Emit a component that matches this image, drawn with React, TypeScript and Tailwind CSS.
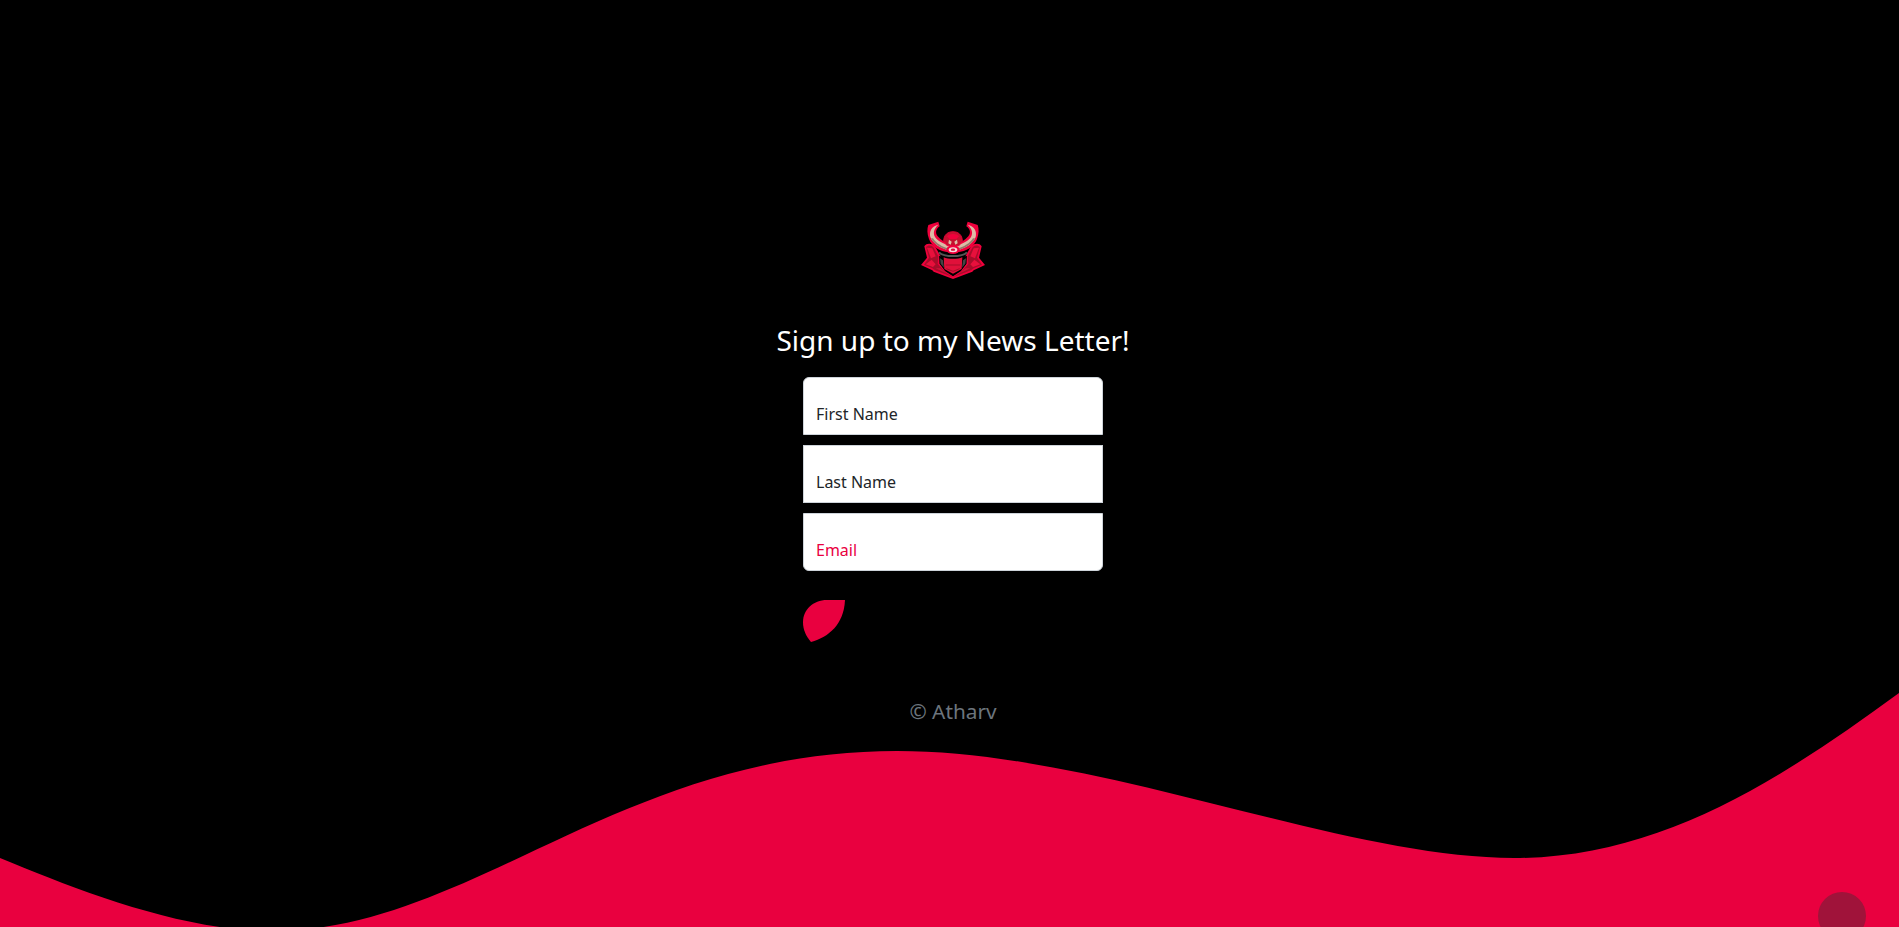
const inputClass =
  'block h-[58px] w-full border border-[#ced4da] bg-white px-3 pt-[26px] pb-[10px] text-base outline-none placeholder:text-[#212529]';

const Logo = ({ className }: { className: string }) => {
  const half = (
    <>
      {/* outer silhouette of shoulder and skirt */}
      <path d="M28 94 C34 84 50 84 60 94 L76 122 L74 146 L90 168 L114 184 L114 192 L56 170 L52 166 L18 150 L36 128 Z" fill="#f0003c" />
      <path d="M33 96 C40 89 50 90 56 98 L70 124 L68 146 L90 172 L114 187 L60 166 L52 160 L27 149 L42 128 Z" fill="#a80c2a" />
      <path d="M36 98 L52 100 L62 124 L48 130 Z" fill="#e8103c" />
      <path d="M32 148 L50 134 L62 148 L54 156 Z" fill="#e8103c" />
      <path d="M62 160 L76 160 L92 174 Z" fill="#d2123a" />
      {/* dark gap next to chest */}
      <path d="M72 122 L86 130 L90 160 L112 178 L114 182 L92 168 L74 146 Z" fill="#000" />
      <path d="M75 130 L84 136 L87 158 L77 146 Z" fill="#444444" />
      {/* horn */}
      <path d="M40 30 L70 20 L74 34 C62 42 60 54 68 64 C78 76 92 84 106 90 L102 112 C74 110 50 94 42 72 C36 56 36 42 40 30 Z" fill="#f0003c" />
      <path d="M70 29 C50 33 42 48 46 66 C54 86 76 100 102 106 L104 92 C84 86 68 78 60 66 C54 54 56 42 70 29 Z" fill="#dcbba6" />
      <path d="M48 70 C56 86 76 100 102 106 L102.500 102 C82 96 62 84 54 70 Z" fill="#94796a" />
    </>
  );

  return (
    <svg viewBox="0 0 228 198" className={className} aria-label="logo">
      <g>{half}</g>
      <g transform="translate(228 0) scale(-1 1)">{half}</g>
      {/* helmet dome */}
      <path d="M86 78 C86 60 98 50 114 50 C130 50 142 60 142 78 L132 92 L96 92 Z" fill="#c5102f" stroke="#f0003c" strokeWidth="2.500" />
      <path d="M96 64 C104 55 124 55 132 64 L124 72 L104 72 Z" fill="#f0003c" />
      <path d="M102 74 L110 80 L107 89 L100 85 Z M126 74 L118 80 L121 89 L128 85 Z" fill="#dcbba6" />
      {/* grey band */}
      <path d="M72 112 C86 127 142 127 156 112" fill="none" stroke="#555555" strokeWidth="6" />
      {/* chest */}
      <path d="M86 127 C100 133 128 133 142 127 L140 162 L114 176 L88 162 Z" fill="#e0103a" />
      <path d="M92 150 L136 150" stroke="#a80c2a" strokeWidth="3" />
      <path d="M94 161 L114 169 L134 161" fill="none" stroke="#a80c2a" strokeWidth="3" />
      {/* crest */}
      <ellipse cx="114" cy="104" rx="20" ry="13" fill="#f0003c" />
      <ellipse cx="114" cy="104" rx="13" ry="7.500" fill="#f5dcdc" />
      <ellipse cx="114" cy="104" rx="6.500" ry="3.500" fill="#d80f3a" />
    </svg>
  );
};

export default function App() {
  return (
    <div className="relative flex h-screen flex-col overflow-hidden bg-black font-['Noto_Sans',sans-serif]">
      <main className="h-[693px] shrink-0 pt-[215px] pl-[7px]">
        <div className="flex flex-col items-center">
          <Logo className="block h-[66px] w-[76px]" />
          <h1 className="mt-[43px] mb-[19px] text-[28px] leading-[1.2] font-normal text-white">Sign up to my News Letter!</h1>

          <form className="flex w-[300px] flex-col gap-[10px]">
            <input className={`${inputClass} rounded-t-md`} placeholder="First Name" />
            <input className={inputClass} placeholder="Last Name" />
            <input className={`${inputClass} rounded-b-md placeholder:text-[#e9003f]`} placeholder="Email" />
            <button type="button" aria-label="Sign up" className="mt-[19px] block h-[42px] w-[42px]">
              <svg viewBox="0 0 42 42" className="block h-[42px] w-[42px]">
                <path d="M42 0 L24 0 C10 0 0 10 0 22 C0 30 3 36 8 42 C26 37 41 24 42 0 Z" fill="#e9003f" />
              </svg>
            </button>
          </form>

          <p className="mt-[54px] text-[20.8px] leading-[1.5] text-[#6c757d]">© Atharv</p>
        </div>
      </main>

      <svg viewBox="0 0 1899 234" className="block h-[234px] w-full shrink-0" preserveAspectRatio="none">
        <path
          d="M0 165 C75 196 180 238 272 238 C470 238 620 58 897 58 C1100 58 1340 165 1514 165 C1660 165 1780 87 1899 0 L1899 234 L0 234 Z"
          fill="#e9003f"
        />
      </svg>

      <div className="absolute right-[33px] bottom-[-13px] h-12 w-12 rounded-full bg-[#a0133a]" />
    </div>
  );
}
